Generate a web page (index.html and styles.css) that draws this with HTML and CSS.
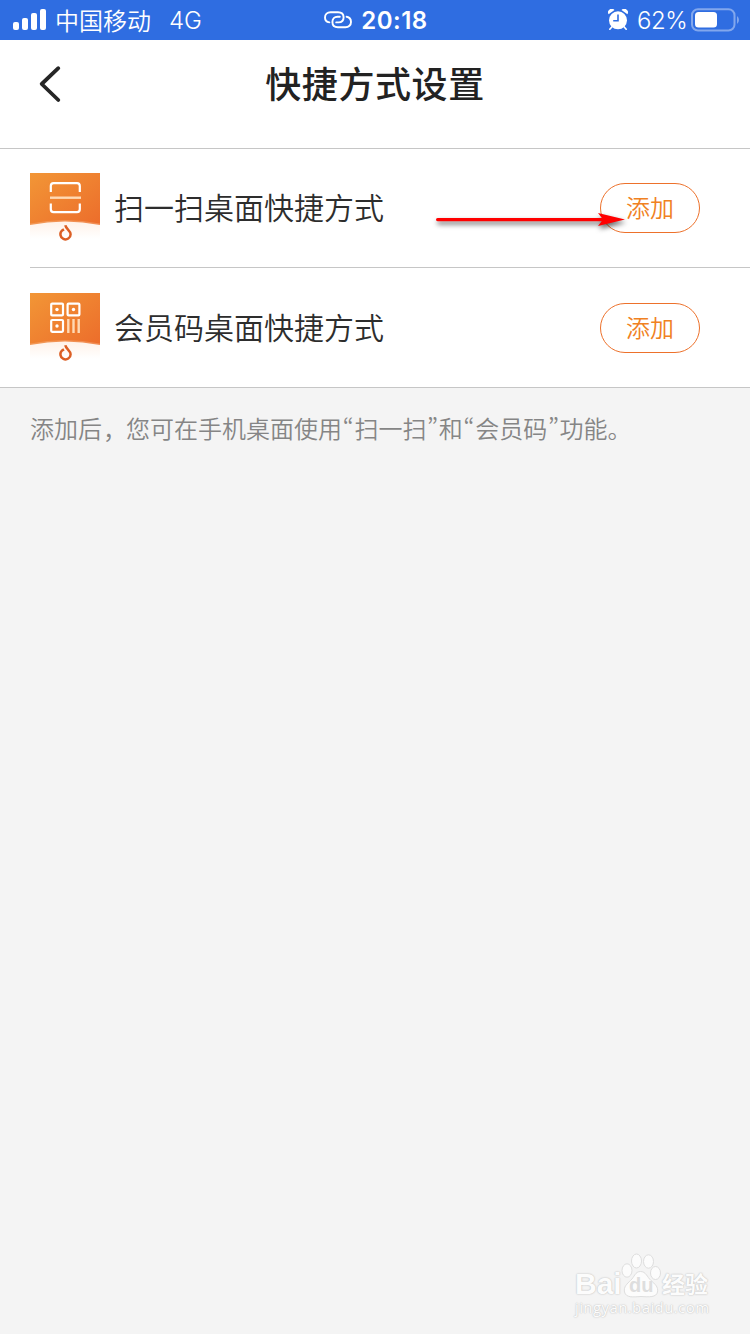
FILE: index.html
```html
<!DOCTYPE html>
<html lang="zh-CN">
<head>
<meta charset="utf-8">
<title>快捷方式设置</title>
<link rel="stylesheet" href="styles.css">
</head>
<body>
<div class="screen">
  <div class="status">
    <div class="status-left">
      <svg class="signal" width="34" height="22" viewBox="0 0 34 22" fill="#fff"><rect x="0" y="13" width="6" height="8" rx="2"/><rect x="9" y="9" width="6" height="12" rx="2"/><rect x="18" y="4" width="6" height="17" rx="2"/><rect x="27" y="0" width="6" height="21" rx="2"/></svg>
      <span class="carrier">中国移动</span>
      <span class="network">4G</span>
    </div>
    <div class="status-mid">
      <svg width="28" height="18" viewBox="0 0 28 18" fill="none" stroke="#fff" stroke-width="1.9" stroke-linecap="round"><path d="M5.400 11.400C2.600 10.800 1 8.800 1 6.400C1 3.200 3.300 1.200 6.500 1.200H14C17.400 1.200 19.600 3.200 19.600 6.300C19.600 9.300 17.600 11.400 14.500 11.400H12.200"/><path d="M22.600 5.800C25.400 6.400 27 8.600 27 10.900C27 14.100 24.700 16.300 21.500 16.300H14C10.600 16.300 8.400 14.200 8.400 11C8.400 8 10.400 5.800 13.500 5.800H15.800"/></svg>
      <span class="clock">20:18</span>
    </div>
    <div class="status-right">
      <svg class="alarm" width="20" height="22" viewBox="0 0 20 22"><g fill="#fff"><path d="M.6 5.200A3.600 3.600 0 0 1 6.500 1.100ZM19.400 5.200A3.600 3.600 0 0 0 13.500 1.100Z"/><circle cx="10" cy="11.300" r="9"/></g><path d="M3.800 18L1.800 20.200M16.200 18L18.200 20.200" stroke="#fff" stroke-width="1.700" stroke-linecap="round"/><path d="M10 5.500V11.700H5.200" fill="none" stroke="#2f6de1" stroke-width="1.600"/></svg>
      <span class="percent">62%</span>
      <svg class="battery" width="48" height="24" viewBox="0 0 48 24"><rect x="1" y="1.200" width="42.500" height="21.300" rx="6" fill="none" stroke="#82a7ed" stroke-width="2"/><rect x="4" y="4" width="22" height="15.500" rx="3.500" fill="#fff"/><path d="M46 8Q48 9.500 48 12T46 16Z" fill="#82a7ed"/></svg>
    </div>
  </div>
  <header class="header">
    <svg class="back" width="22" height="38" viewBox="0 0 22 38"><path d="M19.300 3.200L2.700 19L19.300 35" fill="none" stroke="#262626" stroke-width="3.800" stroke-linecap="round" stroke-linejoin="round"/></svg>
    <h1 class="title">快捷方式设置</h1>
  </header>
  <main class="list">
    <div class="row">
      <svg class="app-icon" width="70" height="70" viewBox="0 0 70 70">
        <defs><linearGradient id="orange" x1="0" y1="0" x2="1" y2="1"><stop offset="0" stop-color="#f29636"/><stop offset="1" stop-color="#ec6c2b"/></linearGradient><linearGradient id="glow" x1="0" y1="0" x2="0" y2="1"><stop offset="0" stop-color="#fff2e9"/><stop offset=".8" stop-color="#fff"/></linearGradient></defs>
        <path d="M0 0H70V54H0Z" fill="url(#orange)"/><path d="M0 50.500Q35 43.500 70 50.500V70H0Z" fill="#f8b88b" opacity=".4"/><path d="M0 52Q35 45 70 52V70H0Z" fill="url(#glow)"/>
        <path d="M20.800 19V13Q20.800 10.200 23.600 10.200H47Q49.800 10.200 49.800 13V19M20.800 30.500V36.300Q20.800 39.100 23.600 39.100H47Q49.800 39.100 49.800 36.300V30.500" fill="none" stroke="#fff" stroke-width="2.200"/><path d="M20 24.700H51" stroke="#ffd9b4" stroke-width="2.400"/>
        <path d="M35.300 52.300C36 56 40.600 57.500 40.600 61.200A5.100 5.100 0 1 1 32.200 57.400L34 56.400" fill="none" stroke="#dc5f25" stroke-width="2.500" stroke-linejoin="round"/>
      </svg>
      <span class="label">扫一扫桌面快捷方式</span>
      <button class="add">添加</button>
      <svg class="arrow" width="200" height="30" viewBox="0 0 200 30"><g fill="#f00"><rect x="4" y="8" width="168" height="3.200" rx="1.600"/><path d="M166 3L193 9.500L166 16L171 9.500Z"/></g></svg>
    </div>
    <div class="divider"></div>
    <div class="row">
      <svg class="app-icon" width="70" height="70" viewBox="0 0 70 70">
        <path d="M0 0H70V54H0Z" fill="url(#orange)"/><path d="M0 50.500Q35 43.500 70 50.500V70H0Z" fill="#f8b88b" opacity=".4"/><path d="M0 52Q35 45 70 52V70H0Z" fill="url(#glow)"/>
        <g fill="none" stroke="#fff" stroke-width="2.200"><rect x="21.200" y="10.600" width="11.800" height="11.800" rx="1"/><rect x="37.600" y="10.600" width="11.800" height="11.800" rx="1"/><rect x="21.200" y="27" width="11.800" height="11.800" rx="1"/></g>
        <g fill="#fff"><circle cx="27" cy="16.500" r="1.700"/><circle cx="43.500" cy="16.500" r="1.700"/><circle cx="27" cy="33" r="1.700"/></g>
        <path d="M38.300 26V40M43.500 26V40M48.700 26V40" stroke="#ffd9b4" stroke-width="2.400"/>
        <path d="M35.300 52.300C36 56 40.600 57.500 40.600 61.200A5.100 5.100 0 1 1 32.200 57.400L34 56.400" fill="none" stroke="#dc5f25" stroke-width="2.500" stroke-linejoin="round"/>
      </svg>
      <span class="label">会员码桌面快捷方式</span>
      <button class="add">添加</button>
    </div>
  </main>
  <p class="hint">添加后<span class="comma">，</span>您可在手机桌面使用<span class="quote">“</span>扫一扫<span class="quote">”</span>和<span class="quote">“</span>会员码<span class="quote">”</span>功能。</p>
  <div class="watermark">
    <div class="brand">
      <span class="brand-bai">Bai</span>
      <span class="paw"><svg width="42" height="46" viewBox="0 0 42 46" fill="#fcfcfc" stroke="#dedede" stroke-width="1"><ellipse cx="7" cy="17.500" rx="5" ry="6.700"/><ellipse cx="16.500" cy="8" rx="5" ry="7"/><ellipse cx="28.500" cy="8.500" rx="5" ry="6.700"/><ellipse cx="35.500" cy="20" rx="5" ry="6.500"/><path d="M20.500 18.500C26 18.500 27 24 31 27.500C35 31 38.500 34 37.500 39C36.500 44.500 29 44 21 43.500C13 44 6 45 4.500 39C3.500 33.500 7 31 10.500 27.500C14.500 24 15 18.500 20.500 18.500Z"/></svg><span class="du">du</span></span>
      <span class="brand-jy">经验</span>
    </div>
    <div class="site">jingyan.baidu.com</div>
  </div>
</div>
</body>
</html>
```
FILE: styles.css
```css
* { box-sizing: border-box; }
body { margin: 0; background: #f4f4f4; font-family: Inter, "Noto Sans CJK SC", sans-serif; }
.screen { height: 1334px; display: flex; flex-direction: column; position: relative; overflow: hidden; }
.status { height: 40px; flex: none; background: #2f6de1; color: #fff; display: grid; grid-template-columns: 1fr auto 1fr; align-items: center; padding: 0 11px 0 13px; font-size: 24px; line-height: 38px; }
.status-left, .status-mid, .status-right { display: flex; align-items: center; height: 40px; }
.signal { margin-right: 8px; }
.carrier { font-family: "Noto Sans CJK SC", sans-serif; font-weight: 350; width: 114px; line-height: 40px; }
.network { font-weight: 300; padding-top: 2px; }
.status-mid { gap: 9px; }
.clock { font-weight: 600; letter-spacing: 0.5px; padding-top: 2px; }
.status-right { justify-content: flex-end; }
.percent { margin-left: 9px; letter-spacing: -0.4px; width: 50px; font-weight: 350; padding-top: 2px; }
.battery { margin-left: 4px; }
.header { height: 109px; flex: none; background: #fff; border-bottom: 1px solid #c6c6c6; display: grid; grid-template-columns: 39px 22px 1fr 61px; align-items: start; }
.back { grid-column: 2; margin-top: 25px; }
.title { grid-column: 3; margin: 15px 0 0; text-align: center; font-size: 36px; line-height: 54px; font-weight: 500; letter-spacing: 0.6px; color: #222; font-family: "Noto Sans CJK SC", sans-serif; }
.list { background: #fff; border-bottom: 1px solid #c6c6c6; }
.row { height: 118px; padding: 24px 50px 0 30px; display: flex; align-items: flex-start; position: relative; }
.divider { height: 1px; margin-left: 30px; background: #c6c6c6; }
.divider + .row { height: 119px; padding-top: 25px; }
.app-icon { flex: none; }
.label { flex: 1; margin-left: 14px; font-family: "Noto Sans CJK SC", sans-serif; font-size: 30px; line-height: 67px; color: #2d2d2d; font-weight: 350; }
.add { width: 100px; height: 50px; margin-top: 10px; padding: 0 0 2px; border: 1px solid #ed712b; border-radius: 25px; background: #fff; color: #f08122; font: 350 24px/46px "Noto Sans CJK SC", sans-serif; }
.arrow { position: absolute; left: 432px; top: 61px; filter: drop-shadow(1px 3px 2.500px rgba(0,0,0,.6)); }
.hint { margin: 22px 30px 0; font-family: "Noto Sans CJK SC", sans-serif; font-size: 24px; line-height: 36px; font-weight: 350; color: #858585; white-space: nowrap; }
.comma { position: relative; left: 1px; top: 1px; }
.quote { display: inline-block; width: 12.400px; text-align: center; font-feature-settings: "palt", "pwid"; }
.watermark { position: absolute; left: 575px; top: 1253px; color: #fcfcfc; text-shadow: 0 0 1px #c4c4c4, 0 0 2px #c4c4c4; }
.brand { display: flex; align-items: flex-start; height: 46px; }
.brand-bai { font: 700 30px/36px "Liberation Sans", sans-serif; margin-top: 13px; width: 45px; }
.paw { position: relative; width: 42px; height: 46px; }
.du { position: absolute; left: 9px; top: 22px; font: 700 20px/20px "Liberation Sans", sans-serif; color: #dedede; text-shadow: none; }
.brand-jy { font: 700 23px/34px "Noto Sans CJK SC", sans-serif; margin-top: 13px; }
.site { font: 400 15px/16px "Open Sans", sans-serif; letter-spacing: .4px; }
```
